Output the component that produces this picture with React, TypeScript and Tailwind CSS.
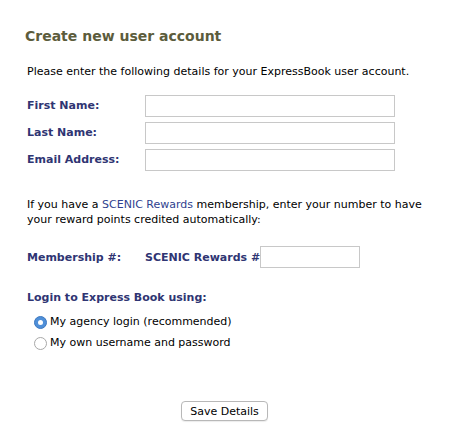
import React from 'react';

const font = { fontFamily: '"DejaVu Sans", Verdana, sans-serif' };

const Field: React.FC<{ label: string }> = ({ label }) => (
  <div className="flex items-center h-[27px]">
    <label className="w-[118px] pt-[2px] font-bold text-[#2f3573]">{label}</label>
    <input type="text" className="w-[250px] h-[22px] border border-[#c8c8c8] bg-white outline-none" />
  </div>
);

export default function App() {
  return (
    <div className="w-[457px] h-[440px] bg-white text-[11px] text-black pl-[27px] pt-[27px]" style={font}>
      <h1 className="-ml-[2px] text-[14px] font-bold text-[#5c5c3c] leading-[18px]">Create new user account</h1>

      <p className="mt-[19px] leading-[15px]">Please enter the following details for your ExpressBook user account.</p>

      <div className="mt-[13px]">
        <Field label="First Name:" />
        <Field label="Last Name:" />
        <Field label="Email Address:" />
      </div>

      <p className="mt-[24px] leading-[15px] pr-[20px]">
        If you have a <span className="text-[#2f3f8f]">SCENIC Rewards</span> membership, enter your number to have your
        reward points credited automatically:
      </p>

      <div className="mt-[19px] flex items-center h-[22px]">
        <span className="w-[118px] pt-[2px] font-bold text-[#2f3573]">Membership #:</span>
        <span className="pt-[2px] font-bold text-[#2f3573]">SCENIC Rewards #</span>
        <input type="text" className="w-[100px] h-[22px] border border-[#c8c8c8] bg-white outline-none" />
      </div>

      <div className="mt-[22px] font-bold text-[#2f3573] leading-[15px]">Login to Express Book using:</div>

      <div className="mt-[10px] pl-[7px] flex flex-col gap-[6px]">
        <label className="flex items-center h-[15px]">
          <span className="w-[13px] h-[13px] rounded-full bg-[#4f8fd8] border border-[#3d78c0] flex items-center justify-center">
            <span className="w-[5px] h-[5px] rounded-full bg-white" />
          </span>
          <span className="ml-[3px]">My agency login (recommended)</span>
        </label>
        <label className="flex items-center h-[15px]">
          <span className="w-[13px] h-[13px] rounded-full bg-white border border-[#a8a8a8]" />
          <span className="ml-[3px]">My own username and password</span>
        </label>
      </div>

      <div className="mt-[50px] flex justify-center pr-[35px]">
        <button className="h-[20px] px-[8px] border border-[#b8b8b8] rounded-[4px] bg-white text-[11px] leading-none shadow-[0_1px_1px_rgba(0,0,0,0.08)]" style={font}>
          Save Details
        </button>
      </div>
    </div>
  );
}
